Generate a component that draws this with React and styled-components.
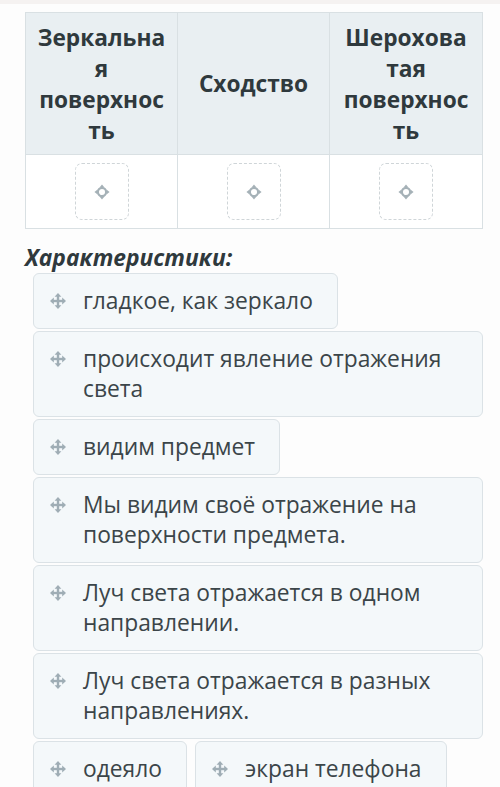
import styled, { createGlobalStyle } from "styled-components";

const Global = createGlobalStyle`
  body {
    margin: 0;
    background: #fdfdfd;
    font-family: "Open Sans", "Noto Sans", sans-serif;
    color: #3b4549;
  }
`;

const Page = styled.main`
  padding: 8px 17px 0 25px;
  border-top: 4px solid #f5f2f1;
`;

const Table = styled.div`
  display: grid;
  grid-template-columns: repeat(3, 1fr);
  border: 1px solid #d9e0e3;
  width: 458px;
  box-sizing: border-box;
`;

const HeadCell = styled.div`
  background: #e9eff2;
  border-right: ${(p) => (p.$last ? "none" : "1px solid #d9e0e3")};
  border-bottom: 1px solid #d9e0e3;
  min-height: 142px;
  padding: 6px 10px;
  box-sizing: border-box;
  display: flex;
  align-items: center;
  justify-content: center;
  text-align: center;
  font-weight: 700;
  font-size: 22.7px;
  line-height: 31px;
  color: #2f393d;
  overflow-wrap: anywhere;
`;

const DropCell = styled.div`
  height: 73px;
  display: flex;
  align-items: center;
  justify-content: center;
  background: #fff;
  border-right: ${(p) => (p.$last ? "none" : "1px solid #d9e0e3")};
`;

const DropZone = styled.div`
  width: 54px;
  height: 57px;
  border: 1.5px dashed #cfd5d8;
  border-radius: 7px;
  box-sizing: border-box;
  display: flex;
  align-items: center;
  justify-content: center;
`;

const Title = styled.h3`
  margin: 16px 0 2px;
  font-size: 22.8px;
  line-height: 26px;
  font-weight: 700;
  font-style: italic;
  color: #2f393d;
`;

const Items = styled.div`
  display: flex;
  flex-wrap: wrap;
  gap: 2px 8px;
  margin-left: 8px;
  width: 450px;
`;

const Item = styled.div`
  display: flex;
  align-items: flex-start;
  gap: 17px;
  box-sizing: border-box;
  width: ${(p) => (p.$full ? "100%" : "auto")};
  padding: 12px 24px 12px 16px;
  background: #f4f8fa;
  border: 1px solid #dbe2e6;
  border-radius: 6px;
  font-size: 22.8px;
  line-height: 30px;
  color: #3b4549;
`;

const Grip = styled.span`
  flex: none;
  display: flex;
  align-items: center;
  height: 30px;
`;

const MoveIcon = () => (
  <svg width="16" height="16" viewBox="0 0 16 16">
    <g stroke="#9fadb5" strokeWidth="2.4">
      <line x1="8" y1="3" x2="8" y2="13" />
      <line x1="3" y1="8" x2="13" y2="8" />
    </g>
    <g fill="#9fadb5">
      <polygon points="8,0 4.6,3.8 11.4,3.8" />
      <polygon points="8,16 4.6,12.2 11.4,12.2" />
      <polygon points="0,8 3.8,4.6 3.8,11.4" />
      <polygon points="16,8 12.2,4.6 12.2,11.4" />
    </g>
  </svg>
);

const TargetIcon = () => (
  <svg width="16" height="16" viewBox="0 0 18 18">
    <circle cx="9" cy="9" r="4.6" fill="none" stroke="#a5b1b7" strokeWidth="2.4" />
    <g fill="#a5b1b7">
      <polygon points="9,0.5 6.2,4 11.8,4" />
      <polygon points="9,17.5 6.2,14 11.8,14" />
      <polygon points="0.5,9 4,6.2 4,11.8" />
      <polygon points="17.5,9 14,6.2 14,11.8" />
    </g>
  </svg>
);

const heads = ["Зеркальная поверхность", "Сходство", "Шероховатая поверхность"];

const items = [
  { text: "гладкое, как зеркало" },
  { text: "происходит явление отражения света", full: true },
  { text: "видим предмет" },
  { text: "Мы видим своё отражение на поверхности предмета.", full: true },
  { text: "Луч света отражается в одном направлении.", full: true },
  { text: "Луч света отражается в разных направлениях.", full: true },
  { text: "одеяло" },
  { text: "экран телефона" },
];

export default function App() {
  return (
    <>
      <Global />
      <Page>
        <Table>
          {heads.map((h, i) => (
            <HeadCell key={h} $last={i === 2}>
              {h}
            </HeadCell>
          ))}
          {heads.map((h, i) => (
            <DropCell key={h} $last={i === 2}>
              <DropZone>
                <TargetIcon />
              </DropZone>
            </DropCell>
          ))}
        </Table>
        <Title>Характеристики:</Title>
        <Items>
          {items.map((it) => (
            <Item key={it.text} $full={it.full}>
              <Grip>
                <MoveIcon />
              </Grip>
              <span>{it.text}</span>
            </Item>
          ))}
        </Items>
      </Page>
    </>
  );
}
